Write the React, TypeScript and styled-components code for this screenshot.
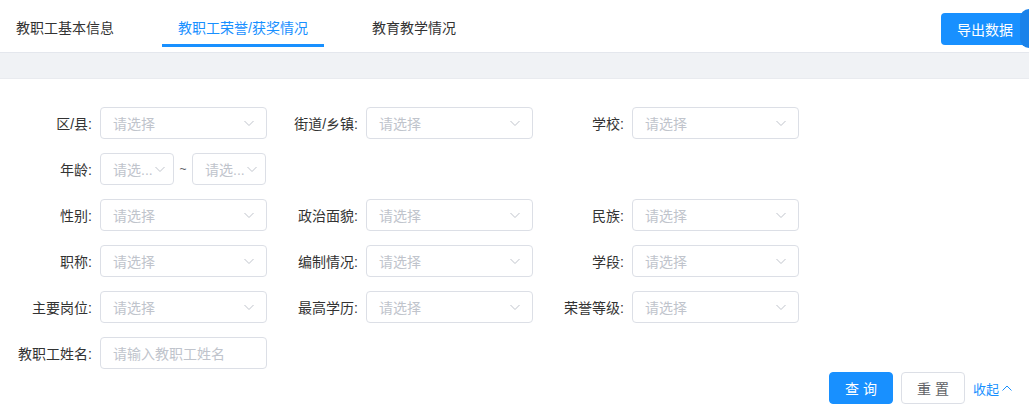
import styled, { createGlobalStyle } from "styled-components";

//style variables
const blue = "#1890ff";
const borderColor = "#dcdfe6";
const placeholderColor = "#c0c4cc";
const textColor = "#333";

const GlobalStyle = createGlobalStyle`
  body {
    margin: 0;
    background: #fff;
    font-family: "Liberation Sans", "Noto Sans CJK SC", sans-serif;
    font-size: 14px;
    color: ${textColor};
  }
`;

const Page = styled.div`
  width: 1029px;
  height: 418px;
  overflow: hidden;
  position: relative;
`;

const Header = styled.div`
  height: 52px;
  display: flex;
  align-items: stretch;
  justify-content: space-between;
  border-bottom: 1px solid #e4e7ed;
  position: relative;
`;

const Tabs = styled.div`
  display: flex;
  gap: 32px;
`;

const Tab = styled.div<{ active?: boolean }>`
  padding: 2px 16px 0 16px;
  display: flex;
  align-items: center;
  font-size: 14px;
  color: ${(p) => (p.active ? blue : textColor)};
  position: relative;
  &::after {
    content: "";
    display: ${(p) => (p.active ? "block" : "none")};
    position: absolute;
    left: 0;
    right: 0;
    bottom: 5px;
    height: 3px;
    background: ${blue};
  }
`;

const ExportButton = styled.button`
  align-self: center;
  margin-top: 6px;
  height: 32px;
  width: 88px;
  padding: 0 0 0 16px;
  text-align: left;
  border: none;
  border-radius: 4px 0 0 4px;
  background: ${blue};
  color: #fff;
  font-family: inherit;
  font-size: 14px;
`;

const SideTab = styled.div`
  position: absolute;
  right: 0;
  top: 9px;
  width: 9px;
  height: 39px;
  background: #1a82ea;
  border-radius: 9px 0 0 9px;
`;

const Band = styled.div`
  height: 25px;
  background: #f0f2f5;
  border-bottom: 1px solid #e9ebef;
`;

const FormArea = styled.div`
  padding: 28px 16px 0 16px;
`;

const FormGrid = styled.div`
  display: grid;
  grid-template-columns: repeat(3, 266px);
  grid-auto-rows: 32px;
  row-gap: 14px;
`;

const Field = styled.div`
  display: flex;
  align-items: center;
`;

const Label = styled.label`
  width: 84px;
  padding-right: 8px;
  box-sizing: border-box;
  text-align: right;
  font-size: 14px;
  color: ${textColor};
  white-space: nowrap;
`;

const SelectBox = styled.div<{ small?: boolean }>`
  width: ${(p) => (p.small ? 74 : 167)}px;
  height: 32px;
  box-sizing: border-box;
  border: 1px solid ${borderColor};
  border-radius: 4px;
  display: flex;
  align-items: center;
  justify-content: ${(p) => (p.small ? "flex-start" : "space-between")};
  gap: 1px;
  padding: 0 ${(p) => (p.small ? 4 : 11)}px 0 12px;
  color: ${placeholderColor};
  font-size: 14px;
  white-space: nowrap;
  overflow: hidden;
  background: #fff;
`;

const Tilde = styled.span`
  width: 18px;
  text-align: center;
  color: #606266;
  font-size: 12px;
`;

const Actions = styled.div`
  display: flex;
  justify-content: flex-end;
  align-items: center;
  gap: 8px;
  margin-top: 3px;
`;

const Btn = styled.button<{ primary?: boolean }>`
  width: 64px;
  height: 32px;
  border-radius: 4px;
  font-family: inherit;
  font-size: 14px;
  letter-spacing: 4px;
  padding: 0 0 0 4px;
  border: 1px solid ${(p) => (p.primary ? blue : borderColor)};
  background: ${(p) => (p.primary ? blue : "#fff")};
  color: ${(p) => (p.primary ? "#fff" : "#606266")};
`;

const Collapse = styled.span`
  color: ${blue};
  font-size: 13px;
  display: flex;
  align-items: center;
  gap: 2px;
  white-space: nowrap;
`;

const Chevron = ({ up }: { up?: boolean }) => (
  <svg width="12" height="12" viewBox="0 0 12 12" fill="none">
    <path
      d={up ? "M1.5 8.5 L6 4 L10.5 8.5" : "M1.5 4 L6 8.5 L10.5 4"}
      stroke={up ? blue : placeholderColor}
      strokeWidth="1"
    />
  </svg>
);

const Select = ({ text = "请选择", small }: { text?: string; small?: boolean }) => (
  <SelectBox small={small}>
    <span>{text}</span>
    <Chevron />
  </SelectBox>
);

const fields: (string | null)[][] = [
  ["区/县", "街道/乡镇", "学校"],
  ["年龄", null, null],
  ["性别", "政治面貌", "民族"],
  ["职称", "编制情况", "学段"],
  ["主要岗位", "最高学历", "荣誉等级"],
];

const App = () => {
  return (
    <Page>
      <GlobalStyle />
      <Header>
        <Tabs>
          <Tab>教职工基本信息</Tab>
          <Tab active>教职工荣誉/获奖情况</Tab>
          <Tab>教育教学情况</Tab>
        </Tabs>
        <ExportButton>导出数据</ExportButton>
        <SideTab />
      </Header>
      <Band />
      <FormArea>
        <FormGrid>
          {fields.map((row, i) =>
            row.map((name, j) =>
              name === null ? (
                <div key={`${i}-${j}`} />
              ) : name === "年龄" ? (
                <Field key={`${i}-${j}`}>
                  <Label>{name}:</Label>
                  <Select text="请选..." small />
                  <Tilde>~</Tilde>
                  <Select text="请选..." small />
                </Field>
              ) : (
                <Field key={`${i}-${j}`}>
                  <Label>{name}:</Label>
                  <Select />
                </Field>
              )
            )
          )}
          <Field>
            <Label>教职工姓名:</Label>
            <SelectBox>请输入教职工姓名</SelectBox>
          </Field>
        </FormGrid>
        <Actions>
          <Btn primary>查询</Btn>
          <Btn>重置</Btn>
          <Collapse>
            收起
            <Chevron up />
          </Collapse>
        </Actions>
      </FormArea>
    </Page>
  );
};

export default App;
